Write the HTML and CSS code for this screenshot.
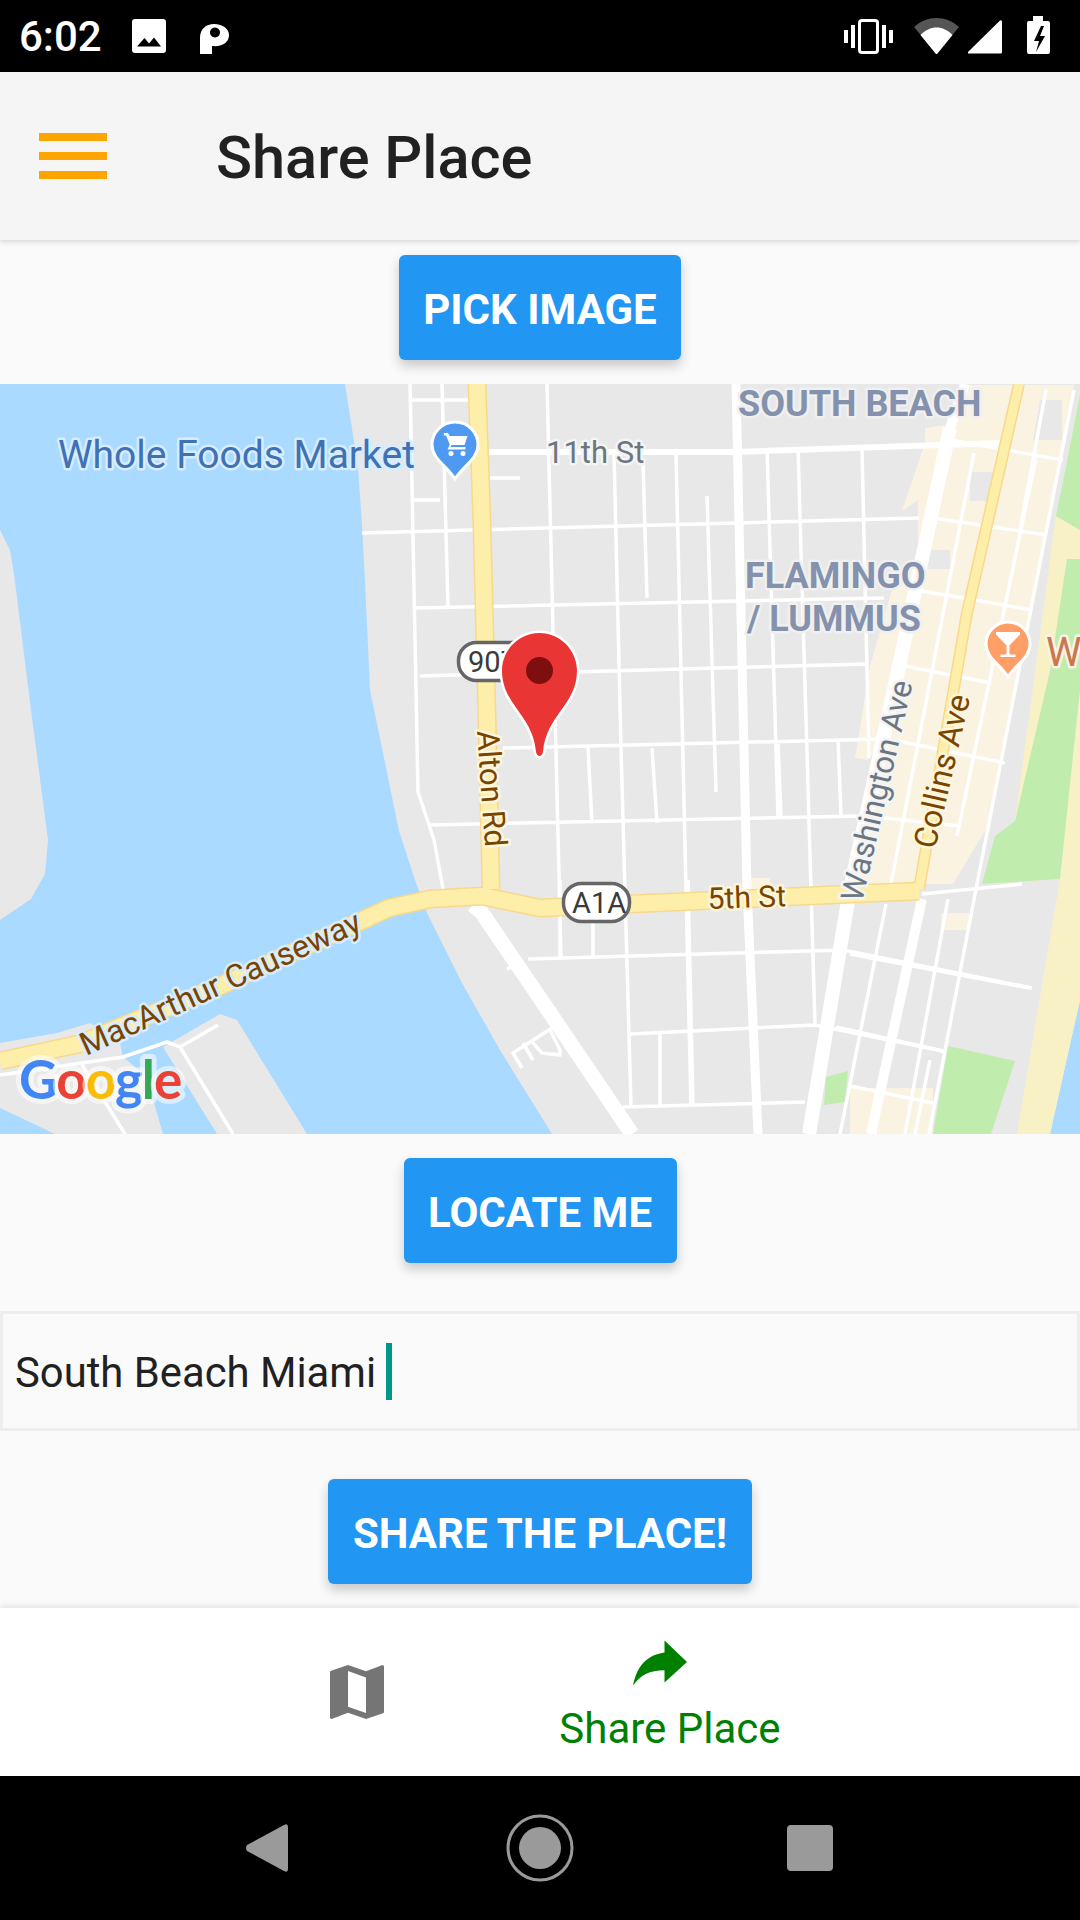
FILE: index.html
```html
<!DOCTYPE html>
<html lang="en">
<head>
<meta charset="utf-8">
<title>Share Place</title>
<link rel="stylesheet" href="styles.css">
</head>
<body>
<div class="screen">
  <header class="status">
    <div class="status-left">
      <span class="time">6:02</span>
      <svg class="si si-image" viewBox="132 19 34 34"><path class="w" fill-rule="evenodd" d="M135 19h28a3 3 0 0 1 3 3v28a3 3 0 0 1-3 3h-28a3 3 0 0 1-3-3V22a3 3 0 0 1 3-3zM137 46.500h24l-7-9-5 6-4.500-5.500z"/></svg>
      <svg class="si si-p" viewBox="200 24 29 30"><path class="w" fill-rule="evenodd" d="M200 38C200 29 206 24 214 24C223 24 229 29 229 35C229 42 223 47 212 46V54H200ZM215 27.500a5 5 0 1 0 .01 0Z"/></svg>
    </div>
    <div class="status-right">
      <svg class="si si-vib" viewBox="844 17 49 38"><path class="w" d="M844 30h4v13h-4zM851 25h4v23h-4zM882 25h4v23h-4zM889 30h4v13h-4z"/><rect class="outline" x="859.500" y="20.500" width="18" height="32" rx="2.500"/></svg>
      <svg class="si si-wifi" viewBox="914 17 45 36"><path class="dim" d="M914 26C927 14 946 14 959 26L936.500 53Z"/><path class="w" d="M920.500 34C930 24 943 24 952.500 34L937.500 52.500Q936.500 53.500 935.500 52.500Z"/></svg>
      <svg class="si si-signal" viewBox="968 20 35 34"><path class="w" d="M968 52L1000 20.500Q1002 19.500 1002 22V52Q1002 53.500 1000.500 53.500H969Q967.500 53.500 968 52Z"/></svg>
      <svg class="si si-batt" viewBox="1027 16 23 38"><path class="w" fill-rule="evenodd" d="M1033 16h10v5h5a2 2 0 0 1 2 2v29a2 2 0 0 1-2 2h-19a2 2 0 0 1-2-2V23a2 2 0 0 1 2-2h4zM1041 26l-7 15h5l-3 11 9-16h-5l4-10z"/></svg>
    </div>
  </header>

  <div class="appbar">
    <div class="burger"><span></span><span></span><span></span></div>
    <h1 class="title">Share Place</h1>
  </div>

  <main class="content">
    <button class="btn btn-pick" type="button">PICK IMAGE</button>

    <div class="map">
      <svg class="map-svg" viewBox="0 384 1080 750">
        <rect class="water" x="0" y="384" width="1080" height="750"/>
        <path class="land" d="M345 384L358 467L362 525L365 581L370 690L382 748L399 831L415 880L427 913L462 983L500 1050L552 1134H1017L1050 1134L1080 1000V384Z"/>
        <path class="land" d="M0 530L10 550L14 574L31 710L48 840L45 874L31 899L0 920Z"/>
        <path class="land" d="M0 1043L57 1033L90 1023L120 1043L123 1057L145 1075L157 1113L163 1134H55L0 1108Z"/>
        <path class="land" d="M163 1047L220 1014L237 1020L307 1134H217Z"/>
        <path class="beach" d="M1080 530L1056 516L1015 821L982 884L1060 879L1017 1134H1050L1080 1000Z"/>
        <path class="urban" d="M960 385L953 424L925 428L925 443L902 511L918 500L918 560L892 590L870 666L855 758L868 760L880 745L858 884H953L988 826L1029 613L1046 535L1074 385Z"/>
        <path class="land" d="M970 472H994V501H970ZM926 550H950V569H926ZM1040 400H1062V440H1033Z"/>
        <path class="urban" d="M941 913H969V930H941ZM850 1088H933V1134H850ZM750 878H770V890H750Z"/>
        <path class="park" d="M1067 559H1080V690L1060 879L982 884L995 836L1015 821L1050 671Z"/>
        <path class="park" d="M1080 395V530L1056 516L1067 462Z"/>
        <path class="park" d="M948 1046L1015 1061L991 1134H933Z"/>
        <path class="park" d="M826 1077L848 1071L845 1102L824 1105Z"/>

        <path class="st" d="M410 384L418 792L434 840L444 894M442 384L448 608M362 533L919 518M415 608L884 598M420 676L867 664M503 748L884 739M430 825L860 816M410 400H477M413 500H440M490 478H520M547 384L561 957M614 453L621 748L631 1107M676 453L691 1107M798 448L815 1025M643 462L647 598M707 496L716 792M767 448L778 816M862 448L869 758M528 959L843 950L1032 988M630 1034L815 1025L943 1051M623 1107L805 1102M593 900V959M660 1033V1107M688 880L693 1107M560 880V959M588 748L592 823M652 748L657 823M778 744L781 816M838 739L841 816"/>
        <path class="st" d="M0 1075L123 1057L167 1042L180 1047L233 1134M180 1047L218 1025M82 1065L125 1134M552 1028L513 1053L522 1068M523 1043L533 1060M532 1042L542 1053L560 1055L560 1050L550 1030M507 969L517 965"/>
        <path class="st" d="M1074 390L977 884L929 1134M974 453L891 884M1036 458L957 836M1046 390L1020 530M950 440L1063 460M933 518L1046 535M922 591L1032 610M905 666L991 683M898 741L1005 763M884 818L960 826M922 894L1022 884M886 904L840 1134M948 899L905 1134M850 954L1029 988M836 1027L943 1051M850 1086L933 1103M930 1060L915 1134"/>
        <path class="st-wide" d="M485 452H736L1000 443"/>
        <path class="rd-white" d="M736 384L747 889L758 1134"/>
        <path class="rd-white-l" d="M950 428L898 671L850 889L809 1134"/>
        <path class="rd-white-m" d="M965 384L950 428"/>
        <path class="rd-white-m" d="M922 899L871 1134"/>
        <path class="rd-white-d" d="M473 905L482 913L550 1013L632 1134"/>

        <path class="hw-edge" d="M477 384L482 525L487 719L491 889M0 1061L79 1044L220 986L389 908L430 899L482 896L540 908L919 891"/>
        <path class="hw-edge hw-edge-n" d="M919 889L967 613L1019 384"/>
        <path class="hw" d="M477 384L482 525L487 719L491 889M0 1061L79 1044L220 986L389 908L430 899L482 896L540 908L919 891"/>
        <path class="hw hw-n" d="M919 889L967 613L1019 384"/>

        <text class="lb lb-poi" x="58" y="468">Whole Foods Market</text>
        <text class="lb lb-st" x="546" y="463">11th St</text>
        <text class="lb lb-area" x="738" y="416">SOUTH BEACH</text>
        <text class="lb lb-area" x="745" y="588">FLAMINGO</text>
        <text class="lb lb-area" x="747" y="631">/ LUMMUS</text>
        <text class="lb lb-st lb-wash" transform="translate(862 903) rotate(-77)">Washington Ave</text>
        <text class="lb lb-rd lb-coll" transform="translate(935 850) rotate(-77)">Collins Ave</text>
        <text class="lb lb-rd lb-alt" transform="translate(477 731) rotate(86)">Alton Rd</text>
        <text class="lb lb-rd lb-five" transform="translate(708 909) rotate(-2)">5th St</text>
        <text class="lb lb-rd lb-mac" transform="translate(86 1056) rotate(-24.400)">MacArthur Causeway</text>
        <text class="lb lb-w" x="1046" y="666">W</text>

        <rect class="shield" x="458.500" y="642.500" width="76" height="38" rx="18"/>
        <text class="shield-t" x="468" y="672">907</text>
        <rect class="shield" x="563.500" y="883.500" width="66" height="38" rx="18"/>
        <text class="shield-t" x="572" y="913">A1A</text>

        <path class="pin pin-b" d="M455 422a23 23 0 0 1 23 23c0 14-15 21-23 34c-8-13-23-20-23-34a23 23 0 0 1 23-23z"/>
        <path class="w" d="M444 433h4l1.500 3h18l-3 9h-13l-1 2h15v2.500h-18l2.300-5-3.800-9h-2.300z"/>
        <circle class="w" cx="451" cy="453.500" r="2.500"/><circle class="w" cx="463" cy="453.500" r="2.500"/>

        <path class="pin pin-o" d="M1008 622a22 22 0 0 1 22 22c0 14-14 20-22 33c-8-13-22-19-22-33a22 22 0 0 1 22-22z"/>
        <path class="w" d="M996 632h24v2.500l-10.500 11v9h6v2.500h-15v-2.500h6v-9l-10.500-11z"/>

        <path class="marker" d="M539.500 633C560 633 577 650 577 670.500C577 705 546 715 543 752Q542 756 539.500 756Q537 756 536 752C533 715 502 705 502 670.500C502 650 519 633 539.500 633Z"/>
        <circle class="marker-dot" cx="539.500" cy="670.500" r="13.500"/>

        <text class="glogo" x="19" y="1099"><tspan class="g-b">G</tspan><tspan class="g-r">o</tspan><tspan class="g-y">o</tspan><tspan class="g-b">g</tspan><tspan class="g-g">l</tspan><tspan class="g-r">e</tspan></text>
      </svg>
    </div>

    <button class="btn btn-locate" type="button">LOCATE ME</button>

    <div class="field"><span class="field-text">South Beach Miami</span><span class="caret"></span></div>

    <button class="btn btn-share" type="button">SHARE THE PLACE!</button>
  </main>

  <nav class="tabs">
    <div class="tab tab-map">
      <svg class="tab-icon" viewBox="0 0 512 512"><path class="ic-grey" fill-rule="evenodd" d="M437.333 64c-2.176 0-4.396 1.369-9.176 3.207S320 108.802 320 108.802L192 64 71.469 104.531C67.197 105.955 64 109.604 64 114.309v322.358C64 442.643 69.355 448 75.333 448c1.971 0 5.223-1.645 9.020-3.057S192 403.197 192 403.197L320 448l120.531-40.531c4.272-1.424 7.469-5.073 7.469-9.778V75.333C448 69.357 442.643 64 437.333 64zM320 405.333l-128-45.333V106.667l128 45.333v253.333z"/></svg>
    </div>
    <div class="tab tab-share">
      <svg class="tab-icon tab-icon-share" viewBox="0 0 512 512"><path class="ic-green" d="M448 248L288 96v85.334C138.666 202.667 85.333 309.334 64 416c53.333-74.666 117.333-108.802 224-108.802v87.469L448 248z"/></svg>
      <span class="tab-label">Share Place</span>
    </div>
  </nav>

  <footer class="navbar">
    <svg class="nav-ic nav-back" viewBox="246 1824 42 48"><path class="nav-fill" d="M247 1845L284 1825Q288 1823 288 1827V1869Q288 1873 284 1871L247 1851Q245 1848 247 1845Z"/></svg>
    <svg class="nav-ic nav-home" viewBox="506 1814 68 68"><circle class="nav-ring" cx="540" cy="1848" r="32"/><circle class="nav-fill" cx="540" cy="1848" r="21"/></svg>
    <span class="nav-square"></span>
  </footer>
</div>
</body>
</html>
```

FILE: styles.css
```css
* { box-sizing: border-box; }
html, body { margin: 0; padding: 0; }
body { font-family: Roboto, "Liberation Sans", sans-serif; background: #fafafa; }

.screen { width: 1080px; height: 1920px; display: flex; flex-direction: column; overflow: hidden; }

/* status bar */
.status { height: 72px; flex: none; background: #000; display: flex; justify-content: space-between; align-items: center; padding: 0 30px 0 19px; }
.status-left, .status-right { display: flex; align-items: center; }
.time { color: #fff; font-size: 42px; font-weight: 500; line-height: 72px; width: 113px; padding-top: 2px; }
.si { display: block; }
.si-image { width: 34px; height: 34px; }
.si-p { width: 29px; height: 30px; margin-left: 34px; margin-top: 6px; }
.si-vib { width: 49px; height: 38px; }
.si-wifi { width: 45px; height: 36px; margin-left: 21px; margin-top: -1px; }
.si-signal { width: 35px; height: 34px; margin-left: 9px; margin-top: 1px; }
.si-batt { width: 23px; height: 38px; margin-left: 24px; margin-top: -2px; }
.w { fill: #fff; }
.dim { fill: #555; }
.outline { fill: none; stroke: #fff; stroke-width: 3; }

/* app bar */
.appbar { height: 168px; flex: none; background: #f5f5f5; display: flex; align-items: center; padding-left: 39px; position: relative; z-index: 2; box-shadow: 0 2px 5px rgba(0,0,0,.14); }
.burger { width: 68px; display: flex; flex-direction: column; gap: 11px; }
.burger span { display: block; height: 8px; background: #ffa500; }
.title { margin: 5px 0 0 109px; font-size: 59.500px; font-weight: 500; color: #212121; line-height: 1; }

/* content */
.content { flex: 1; display: flex; flex-direction: column; align-items: center; background: #fafafa; }
.btn { display: block; height: 105px; padding: 3px 0 0; border: 0; border-radius: 6px; background: #2196f3; color: #fff; font-family: Roboto, sans-serif; font-size: 42px; font-weight: 700; box-shadow: 0 6px 12px rgba(0,0,0,.2); }
.btn-pick { margin-top: 15px; width: 282px; }
.btn-locate { margin-top: 24px; width: 273px; }
.btn-share { margin-top: 48px; width: 424px; }

.map { width: 1080px; height: 750px; margin-top: 24px; flex: none; overflow: hidden; }
.map-svg { display: block; width: 1080px; height: 750px; }
.water { fill: #aadaff; }
.land { fill: #e8e8e8; }
.beach { fill: #f9f1c6; }
.urban { fill: #faf3e2; }
.park { fill: #c0ecae; }
.st, .st-wide, .rd-white, .rd-white-l, .rd-white-m, .rd-white-d, .hw, .hw-edge { fill: none; stroke-linejoin: round; }
.st { stroke: #fff; stroke-width: 3.500; }
.st-wide { stroke: #fff; stroke-width: 6; }
.rd-white { stroke: #fff; stroke-width: 9; }
.rd-white-l { stroke: #fff; stroke-width: 14; }
.rd-white-m { stroke: #fff; stroke-width: 10; }
.rd-white-d { stroke: #fff; stroke-width: 15; }
.hw-edge { stroke: #f8d98c; stroke-width: 19; }
.hw { stroke: #fdefaa; stroke-width: 16; }
.hw-edge-n { stroke-width: 12; }
.hw-n { stroke-width: 9; }

.lb { font-family: Roboto, sans-serif; paint-order: stroke; stroke-linejoin: round; stroke-width: 5px; }
.lb-poi { font-size: 39px; fill: #3f71b5; stroke: #d6ecff; }
.lb-st { font-size: 31px; fill: #6c7680; stroke: #f4f4f4; }
.lb-wash { font-size: 31.500px; }
.lb-area { font-size: 36px; font-weight: 700; fill: #8492ad; stroke: #f0f0f0; }
.lb-rd { font-size: 31px; fill: #7a4400; stroke: #fdf6da; }
.lb-coll { font-size: 32px; }
.lb-five { font-size: 30px; }
.lb-mac { font-size: 32px; stroke: #d6ecff; }
.lb-w { font-size: 40px; fill: #c9774e; stroke: #faf3e2; }

.shield { fill: #fff; stroke: #666; stroke-width: 3.500; }
.shield-t { font-family: Roboto, sans-serif; font-size: 29px; fill: #3a3a3a; }

.pin { stroke: #fff; stroke-width: 3; }
.pin-b { fill: #4e9af2; }
.pin-o { fill: #ff9e67; }
.marker { fill: #ea3535; stroke: #fff; stroke-width: 5; paint-order: stroke; }
.marker-dot { fill: #7f0f0f; }

.glogo { font-family: Lato, Roboto, sans-serif; font-size: 53px; font-weight: 700; letter-spacing: -1px; paint-order: stroke; stroke: rgba(255,255,255,.55); stroke-width: 10px; stroke-linejoin: round; }
.g-b { fill: #4285f4; }
.g-r { fill: #ea4335; }
.g-y { fill: #fbbc05; }
.g-g { fill: #34a853; }

.field { width: 1080px; height: 120px; margin-top: 48px; flex: none; border: 3px solid #eeeeee; background: #fafafa; display: flex; align-items: center; padding-left: 12px; }
.field-text { font-size: 41.800px; color: #212121; line-height: 1; padding-top: 3px; }
.caret { width: 6px; height: 57px; margin-left: 10px; background: #009688; }

/* tabs */
.tabs { height: 168px; flex: none; background: #fff; display: flex; padding-left: 232px; position: relative; z-index: 1; box-shadow: 0 -2px 6px rgba(0,0,0,.1); }
.tab { display: flex; flex-direction: column; align-items: center; }
.tab-map { width: 250px; padding-top: 48px; }
.tab-share { width: 376px; padding-top: 19px; }
.tab-icon { display: block; width: 72px; height: 72px; flex: none; }
.tab-icon-share { margin-right: 20px; }
.ic-grey { fill: #757575; }
.ic-green { fill: #008000; }
.tab-label { font-size: 42px; line-height: 50px; color: #008000; margin-top: 5px; }

/* navigation bar */
.navbar { height: 144px; flex: none; background: #000; display: flex; align-items: center; padding-left: 246px; }
.nav-ic { display: block; flex: none; }
.nav-back { width: 42px; height: 48px; }
.nav-home { width: 68px; height: 68px; margin-left: 218px; }
.nav-square { display: block; width: 46px; height: 46px; margin-left: 213px; border-radius: 4px; background: #9a9a9a; }
.nav-fill { fill: #9a9a9a; }
.nav-ring { fill: none; stroke: #9a9a9a; stroke-width: 3; }
```
